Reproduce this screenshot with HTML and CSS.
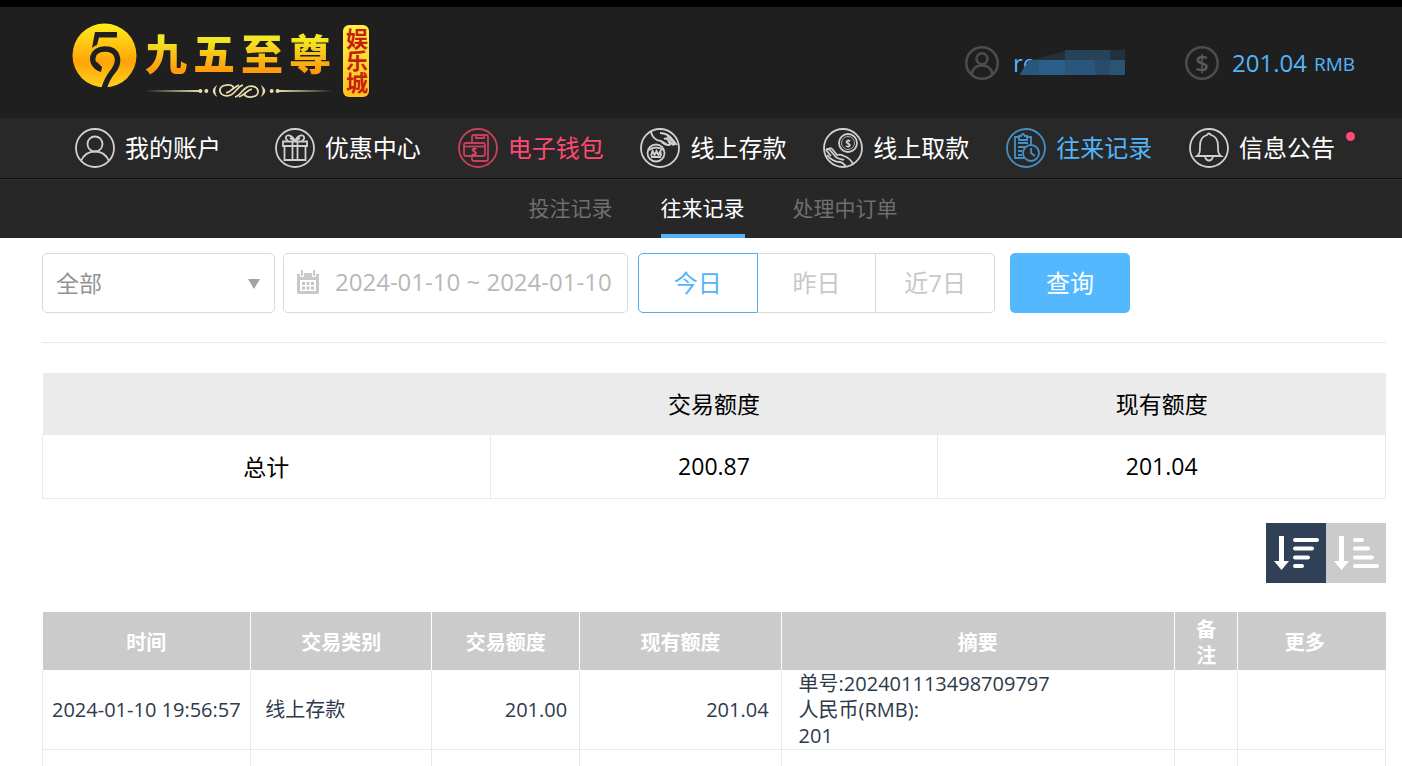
FILE: index.html
```
<!DOCTYPE html>
<html lang="zh-CN">
<head>
	<meta charset="UTF-8">
	<title>往来记录</title>
	<link rel="stylesheet" href="styles.css">
</head>
<body>

	<header class="header">
		<a href="#" class="logo">
			<svg class="logo-mark" viewBox="0 0 65 65">
				<defs>
					<linearGradient id="gold" x1="0" y1="0" x2="0" y2="1">
						<stop offset="0" stop-color="#ffec1c"/>
						<stop offset="0.6" stop-color="#ffa408"/>
						<stop offset="1" stop-color="#ffd21c"/>
					</linearGradient>
				</defs>
				<circle cx="32.500" cy="32.500" r="32" fill="url(#gold)"/>
				<path d="M23 9H45V14.500H27L25 22Q22 23 20 25Z" fill="#1f1f1f"/>
				<path d="M27 45C17 40 19 26 33 26C47 26 48 39 42 47C37 53 34 58 32 66" fill="none" stroke="#1f1f1f" stroke-width="5.500"/>
				<path d="M19 40L25 39L30 44L29 49Q22 47 19 40Z" fill="#1f1f1f"/>
			</svg>
			<span class="logo-text">
				<span class="logo-name"><b>九</b><b>五</b><b>至</b><b>尊</b></span>
				<svg class="logo-line" viewBox="0 0 190 16">
					<g fill="#e9dfae">
						<path d="M0 8L56 7V9Z"/>
						<path d="M190 8L134 7V9Z"/>
						<circle cx="56" cy="8" r="2"/>
						<circle cx="62" cy="8" r="2"/>
						<circle cx="128" cy="8" r="2"/>
						<circle cx="134" cy="8" r="2"/>
						<path d="M73 2Q64 8 73 14Q69 8 73 2ZM117 2Q126 8 117 14Q121 8 117 2Z"/>
					</g>
					<g fill="none" stroke="#e9dfae" stroke-width="1.800">
						<path d="M99 2C93 3 91 13 83 13C74 13 73 3 82 2C89 1 91 5 88 6"/>
						<path d="M91 14C97 13 99 3 107 3C116 3 117 13 108 14C101 15 99 11 102 10"/>
						<path d="M95 2C89 4 87 9 82 10M95 14C101 12 103 7 108 6"/>
					</g>
				</svg>
			</span>
			<span class="logo-tag">娱乐城</span>
		</a>
		<div class="account">
			<div class="user">
				<svg class="account-icon" viewBox="0 0 40 40">
					<circle cx="20" cy="20" r="18.500"/>
					<circle cx="20" cy="15" r="6.500"/>
					<path d="M8 33C9 26 14 23 20 23S31 26 32 33"/>
				</svg>
				<span class="user-name">re
					<svg class="mask" viewBox="0 0 108 26">
						<path d="M3 24L12 10H108V25H3Z" fill="#2b567c"/>
						<path d="M14 10L48 1V10Z" fill="#22303b"/>
						<rect x="48" y="0" width="45" height="10" fill="#27435a"/>
						<rect x="93" y="0" width="15" height="10" fill="#23313c"/>
						<rect x="22" y="10" width="26" height="15" fill="#2d5f8b"/>
						<rect x="78" y="10" width="15" height="15" fill="#294b69"/>
						<rect x="93" y="10" width="15" height="15" fill="#2b5373"/>
					</svg>
				</span>
			</div>
			<div class="balance">
				<svg class="account-icon" viewBox="0 0 40 40">
					<circle cx="20" cy="20" r="18.500"/>
					<text x="20" y="30" class="dollar-big">$</text>
				</svg>
				<span class="amount">201.04</span>
				<span class="unit">RMB</span>
			</div>
		</div>
	</header>

	<nav class="nav">
		<a href="#" class="nav-item first">
			<svg class="nav-icon" viewBox="0 0 40 40">
				<circle cx="20" cy="20" r="19"/>
				<circle cx="20" cy="16" r="7.500"/>
				<path d="M6 33C9 26 14 23.500 20 23.500S31 26 34 33"/>
			</svg>
			<span>我的账户</span>
		</a>
		<a href="#" class="nav-item">
			<svg class="nav-icon" viewBox="0 0 40 40">
				<circle cx="20" cy="20" r="19"/>
				<path d="M8 13.500H32V18H8ZM9.500 18V32H30.500V18M17.500 13.500V32M22.500 13.500V32"/>
				<path d="M20 13C17 7 12 6 11 9C10 11 12 12 13 13M20 13C23 7 28 6 29 9C30 11 28 12 27 13M20 13L15 10M20 13L25 10"/>
			</svg>
			<span>优惠中心</span>
		</a>
		<a href="#" class="nav-item hot">
			<svg class="nav-icon" viewBox="0 0 40 40">
				<circle cx="20" cy="20" r="19"/>
				<path d="M14 15V9Q14 7 16 7H28Q30 7 30 9V31Q30 33 28 33H16Q14 33 14 31V28"/>
				<path d="M18 7V10H26V7"/>
				<rect x="6" y="15" width="21" height="13" rx="2"/>
				<path d="M6 18.500H27"/>
				<text x="16" y="26.500" class="dollar">$</text>
			</svg>
			<span>电子钱包</span>
		</a>
		<a href="#" class="nav-item">
			<svg class="nav-icon" viewBox="0 0 40 40">
				<circle cx="20" cy="20" r="19"/>
				<circle cx="16" cy="25" r="8.500"/>
				<path d="M9 22Q16 17 23 22M11 28L12.500 23L14.500 27L16.500 23L18.500 27L20.500 23L21 28M11 29H21"/>
				<path d="M11 4C12 9 16 13 21 13C24 14 26 17 29 17C31 17 30 15 28 13M20 5C26 5 30 8 33 12L37 17M24 11C27 9 29 13 32 16Q34 18 34 15M27 9C30 10 33 14 35 17M21 13Q24 17 28 17"/>
			</svg>
			<span>线上存款</span>
		</a>
		<a href="#" class="nav-item">
			<svg class="nav-icon" viewBox="0 0 40 40">
				<circle cx="20" cy="20" r="19"/>
				<circle cx="25" cy="15" r="9"/>
				<circle cx="25" cy="15" r="6.500" stroke-width="0.800"/>
				<text x="25" y="18.500" class="dollar">$</text>
				<path d="M3 22L8 28M6 21L12 28M10 22L14 27Q17 26 21 28C24 29 28 32 30 36M4 27C8 32 12 34 17 34C20 34 21 37 23 38M12 28C14 31 18 31 21 32M3 22Q5 20 6 22M6 21Q8 19 10 22"/>
			</svg>
			<span>线上取款</span>
		</a>
		<a href="#" class="nav-item active">
			<svg class="nav-icon" viewBox="0 0 40 40">
				<circle cx="20" cy="20" r="19"/>
				<path d="M18 30H9V9H13M21 9H25V17"/>
				<path d="M13 12V8H15Q17 4 19 8H21V12Z"/>
				<path d="M12 15H22M12 19H19M12 23H16M12 27H16"/>
				<circle cx="25" cy="25" r="8"/>
				<path d="M25 20V25L29 28"/>
			</svg>
			<span>往来记录</span>
		</a>
		<a href="#" class="nav-item notice">
			<svg class="nav-icon" viewBox="0 0 40 40">
				<circle cx="20" cy="20" r="19"/>
				<path d="M8 28C11 26 11 23 11 18C11 11 14 8 18 7Q20 4 22 7C26 8 29 11 29 18C29 23 29 26 32 28Z"/>
				<path d="M16 28.500Q17 32.500 20 32.500T24 28.500"/>
			</svg>
			<span>信息公告</span>
		</a>
	</nav>

	<nav class="subnav">
		<a href="#">投注记录</a>
		<a href="#" class="selected">往来记录</a>
		<a href="#">处理中订单</a>
	</nav>

	<main class="main">
		<form class="filter">
			<div class="select-box">
				<select aria-label="类别">
					<option>全部</option>
				</select>
			</div>
			<label class="date-box">
				<svg class="calendar" viewBox="0 0 24 26">
					<path d="M1 5H4V8H8V4H16V8H20V5H23V23Q23 25 21 25H3Q1 25 1 23Z" fill="#c9c9c9"/>
					<path d="M5 1H7V7H5ZM17 1H19V7H17Z" fill="#c9c9c9"/>
					<rect x="4" y="11" width="16" height="11" fill="#fff"/>
					<path d="M6 14.500H18M6 19H18" stroke="#c4c4c4" stroke-width="3" stroke-dasharray="3 1.500"/>
				</svg>
				<input type="text" value="2024-01-10 ~ 2024-01-10" aria-label="日期">
			</label>
			<div class="days">
				<button type="button" class="selected">今日</button>
				<button type="button">昨日</button>
				<button type="button">近7日</button>
			</div>
			<button type="submit" class="search">查询</button>
		</form>

		<table class="total">
			<thead>
				<tr><th></th><th>交易额度</th><th>现有额度</th></tr>
			</thead>
			<tbody>
				<tr><td>总计</td><td>200.87</td><td>201.04</td></tr>
			</tbody>
		</table>

		<div class="sort">
			<button type="button" class="selected" aria-label="降序">
				<svg viewBox="0 0 60 60">
					<path d="M13 13H18V38H23L15.500 47L8 38H13Z" fill="#fff"/>
					<path d="M29 17H51M29 25.500H46M29 34.500H42M29 43H36" stroke="#fff" stroke-width="4" stroke-linecap="round"/>
				</svg>
			</button>
			<button type="button" aria-label="升序">
				<svg viewBox="0 0 60 60">
					<path d="M13 13H18V38H23L15.500 47L8 38H13Z" fill="#fff"/>
					<path d="M29 17H36M29 25.500H42M29 34.500H46M29 43H51" stroke="#fff" stroke-width="4" stroke-linecap="round"/>
				</svg>
			</button>
		</div>

		<table class="list">
			<colgroup>
				<col class="c-time"><col class="c-type"><col class="c-amount"><col class="c-left"><col class="c-desc"><col class="c-note"><col class="c-more">
			</colgroup>
			<thead>
				<tr>
					<th>时间</th>
					<th>交易类别</th>
					<th>交易额度</th>
					<th>现有额度</th>
					<th>摘要</th>
					<th>备注</th>
					<th>更多</th>
				</tr>
			</thead>
			<tbody>
				<tr>
					<td class="time">2024-01-10 19:56:57</td>
					<td>线上存款</td>
					<td class="num">201.00</td>
					<td class="num">201.04</td>
					<td class="desc">单号:202401113498709797<br>人民币(RMB):<br>201</td>
					<td></td>
					<td></td>
				</tr>
				<tr class="next">
					<td></td><td></td><td></td><td></td><td></td><td></td><td></td>
				</tr>
			</tbody>
		</table>
	</main>

</body>
</html>
```
FILE: styles.css
```
*{
	margin: 0;
	padding: 0;
	box-sizing: border-box;
}
body{
	border-top: 7px solid #000;
	background: #fff;
	font-family: "Open Sans", "Noto Sans CJK SC", sans-serif;
	font-weight: 400;
}
a{
	text-decoration: none;
}
button, input, select{
	font-family: inherit;
	font-size: 24px;
	outline: none;
}
button{
	cursor: pointer;
}
svg{
	display: block;
}

/* 头部 */
.header{
	display: flex;
	justify-content: space-between;
	height: 111px;
	padding: 0 47px 0 72px;
	background: #1f1f1f;
}
.logo{
	display: flex;
	align-items: flex-start;
	padding-top: 16px;
}
.logo-mark{
	width: 65px;
	height: 65px;
}
.logo-text{
	margin: 2px 10px 0 8px;
}
.logo-name{
	display: flex;
	gap: 6px;
}
.logo-name b{
	font-size: 42px;
	line-height: 58px;
	font-weight: 900;
	color: transparent;
	background: linear-gradient(#f2e823 25%, #ff9a0a 80%);
	-webkit-background-clip: text;
	background-clip: text;
}
.logo-line{
	width: 188px;
	height: 16px;
}
.logo-tag{
	margin-top: 2px;
	padding: 3px 0;
	border-radius: 6px;
	background: linear-gradient(#fff04a, #ffc21a);
	writing-mode: vertical-rl;
	font-size: 22px;
	line-height: 26px;
	font-weight: 700;
	color: #c81f0c;
}
.account{
	display: flex;
	align-items: center;
	gap: 60px;
	color: #54b4fb;
	font-size: 24px;
}
.user, .balance{
	display: flex;
	align-items: center;
}
.account-icon{
	width: 34px;
	height: 34px;
	fill: none;
	stroke: #4d4d4d;
	stroke-width: 3;
}
.account-icon text{
	fill: #5a5a5a;
	stroke: none;
}
.dollar-big{
	font-size: 28px;
	font-weight: 600;
	text-anchor: middle;
}
.user-name{
	position: relative;
	width: 112px;
	margin-left: 14px;
}
.mask{
	position: absolute;
	right: 0;
	top: 4px;
	width: 108px;
	height: 26px;
}
.amount{
	margin-left: 13px;
}
.unit{
	margin: 3px 0 0 7px;
	font-size: 19px;
}

/* 导航 */
.nav{
	display: flex;
	justify-content: space-between;
	height: 61px;
	padding: 0 67px 0 75px;
	background: #282828;
	border-bottom: 1px solid #111;
}
.nav-item{
	display: flex;
	align-items: center;
	gap: 10px;
	font-size: 24px;
	white-space: nowrap;
	color: #fff;
}
.nav-item span{
	padding-bottom: 3px;
}
.first{
	padding-right: 17px;
}
.nav-icon{
	width: 40px;
	height: 40px;
	fill: none;
	stroke: #d0d0d0;
	stroke-width: 1.8;
}
.nav-icon text{
	fill: #d0d0d0;
	stroke: none;
}
.dollar{
	font-size: 10px;
	font-weight: 700;
	text-anchor: middle;
}
.hot{
	color: #ff4a73;
}
.hot .nav-icon{
	stroke: #c9405f;
}
.hot .nav-icon text{
	fill: #e0466a;
}
.active{
	color: #54b4fb;
}
.active .nav-icon{
	stroke: #4590c7;
}
.notice{
	position: relative;
}
.notice:after{
	content: "";
	position: absolute;
	right: -20px;
	top: 14px;
	width: 9px;
	height: 9px;
	border-radius: 50%;
	background: #ff4a73;
}
.subnav{
	display: flex;
	justify-content: center;
	gap: 48px;
	height: 59px;
	padding-left: 24px;
	background: #272727;
	border-top: 1px solid #333;
}
.subnav a{
	border-bottom: 4px solid transparent;
	font-size: 21px;
	line-height: 56px;
	color: #6f6f6f;
}
.subnav .selected{
	color: #fff;
	border-color: #54b4fb;
}

/* 内容 */
.main{
	padding: 15px 16px 0 42px;
}
.filter{
	display: flex;
	height: 90px;
	padding-bottom: 29px;
	border-bottom: 1px solid #e8e8e8;
}
.select-box{
	position: relative;
	width: 233px;
	margin-right: 8px;
}
.select-box:after{
	content: "";
	position: absolute;
	right: 15px;
	top: 26px;
	border: 6px solid transparent;
	border-top: 10px solid #a2a2a2;
	border-bottom: 0;
	pointer-events: none;
}
.select-box select{
	width: 100%;
	height: 60px;
	padding: 0 13px;
	border: 1px solid #d9d9d9;
	border-radius: 5px;
	background: #fff;
	color: #929292;
	font-size: 23px;
	appearance: none;
}
.date-box{
	display: flex;
	align-items: center;
	width: 345px;
	height: 60px;
	margin-right: 10px;
	padding: 0 0 3px 12px;
	border: 1px solid #d9d9d9;
	border-radius: 5px;
}
.calendar{
	width: 24px;
	height: 26px;
	flex-shrink: 0;
}
.date-box input{
	flex: 1;
	min-width: 0;
	margin-left: 15px;
	border: 0;
	background: none;
	color: #b8b8b8;
}
.days{
	display: flex;
	width: 357px;
	height: 60px;
	margin-right: 15px;
}
.days button{
	flex: 1;
	padding-bottom: 3px;
	border: 1px solid #d9d9d9;
	border-left: 0;
	background: #fff;
	color: #c8c8c8;
}
.days button:last-child{
	border-radius: 0 5px 5px 0;
}
.days .selected{
	border: 1px solid #56acea;
	border-radius: 5px 0 0 5px;
	color: #54b4fb;
}
.search{
	width: 120px;
	height: 60px;
	padding-bottom: 3px;
	border: 0;
	border-radius: 5px;
	background: #54b8ff;
	color: #fff;
}
table{
	width: 100%;
	border-collapse: collapse;
	table-layout: fixed;
}
.total{
	margin-top: 30px;
	font-size: 23px;
	text-align: center;
	color: #000;
}
.total th{
	height: 61px;
	background: #ebebeb;
	font-weight: 400;
}
.total td{
	height: 64px;
	border: 1px solid #e8e8e8;
}
.sort{
	display: flex;
	justify-content: flex-end;
	margin: 24px 0 29px;
}
.sort button{
	width: 60px;
	height: 60px;
	border: 0;
	background: #cbcbcb;
}
.sort .selected{
	background: #304056;
}
.list{
	font-size: 20px;
	line-height: 26px;
	color: #2d3a4b;
}
.c-time{ width: 15.5%; }
.c-type{ width: 13.5%; }
.c-amount{ width: 11%; }
.c-left{ width: 15%; }
.c-desc{ width: 29.3%; }
.c-note{ width: 4.7%; }
.c-more{ width: 11%; }
.list th{
	height: 58px;
	padding: 5px 15px 1px;
	background: #cbcbcb;
	border-right: 1px solid #fff;
	color: #fff;
}
.list th:last-child{
	padding-right: 29px;
	border-right: 0;
}
.list td{
	height: 79px;
	padding: 1px 14px 0;
	border: 1px solid #e8e8e8;
	border-top: 0;
}
.list .time{
	padding-left: 9px;
	padding-right: 5px;
	white-space: nowrap;
}
.list .num{
	padding-right: 12px;
	text-align: right;
}
.list .desc{
	padding-left: 17px;
}
.list .next td{
	height: 40px;
}
```
